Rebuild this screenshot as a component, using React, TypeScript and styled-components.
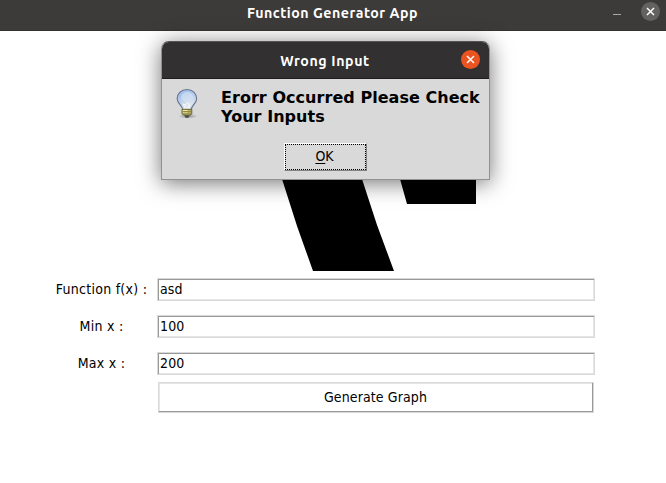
import React from "react";
import styled, { createGlobalStyle } from "styled-components";

const GlobalStyle = createGlobalStyle`
  * { box-sizing: border-box; }
  body { margin: 0; background: #fff; overflow: hidden; }
`;

const Window = styled.div`
  position: relative;
  width: 666px;
  height: 483px;
  background: #fff;
  color: #000;
  font: 14px/17px "DejaVu Sans Condensed", "DejaVu Sans", sans-serif;
  font-stretch: condensed;
  letter-spacing: 0.12px;
  overflow: hidden;
`;

const TitleBar = styled.header`
  height: 31px;
  display: grid;
  grid-template-columns: 1fr auto 1fr;
  align-items: start;
  background: #3d3b39;
  border-bottom: 1px solid #353331;
`;

const Title = styled.h1<{ $top: number; $spacing: number }>`
  grid-column: 2;
  margin: ${(p) => p.$top}px 1px 0 0;
  font: bold 14.2px/18px "Ubuntu", "Noto Sans", sans-serif;
  font-stretch: normal;
  letter-spacing: ${(p) => p.$spacing}px;
  color: #fff;
  white-space: nowrap;
`;

const Controls = styled.div<{ $top: number; $right: number }>`
  display: flex;
  justify-content: flex-end;
  gap: 20px;
  padding: ${(p) => p.$top}px ${(p) => p.$right}px 0 0;
`;

const ControlButton = styled.button<{ $fill?: string; $width?: number }>`
  width: ${(p) => p.$width ?? 19}px;
  height: 19px;
  padding: 0;
  border: 0;
  border-radius: 50%;
  background: ${(p) => p.$fill ?? "transparent"};
  svg { display: block; }
`;

const Plot = styled.svg`
  display: block;
  width: 666px;
  height: 240px;
`;

const Form = styled.form`
  display: grid;
  grid-template-columns: 110px 438px;
  grid-template-rows: repeat(3, 37px) 31px;
  align-items: center;
  margin-left: 47px;
`;

const Label = styled.label`
  padding-right: 1px;
  text-align: center;
  letter-spacing: 0.27px;
`;

const Entry = styled.input`
  width: 438px;
  height: 23px;
  padding: 0 2px 2px;
  border: 1px solid #d9d9d9;
  border-radius: 0;
  outline: none;
  background: #fff;
  box-shadow: inset 1px 1px #999, inset -1px -1px #e6e6e6;
  font: inherit;
  letter-spacing: inherit;
  color: #000;
`;

const GenerateButton = styled.button`
  grid-column: 2;
  width: 436px;
  height: 31px;
  margin-left: 1px;
  padding: 0 1px 0 0;
  border: 1px solid #d9d9d9;
  border-radius: 0;
  background: #fff;
  box-shadow: inset -1px -1px #999, inset 1px 1px #e6e6e6;
  font: inherit;
  letter-spacing: inherit;
  color: #000;
`;

const Dialog = styled.section`
  position: absolute;
  left: 161px;
  top: 41px;
  width: 329px;
  height: 139px;
  border: 1px solid #929292;
  border-top-color: #555;
  border-radius: 8px 8px 0 0;
  background: #d9d9d9;
  box-shadow: 0 3px 22px rgba(0, 0, 0, 0.55);
`;

const DialogBar = styled.header`
  display: grid;
  grid-template-columns: 1fr auto 1fr;
  height: 37px;
  border-radius: 7px 7px 0 0;
  background: #323030;
  border-bottom: 1px solid #1e1c1c;
`;

const DialogContent = styled.div`
  display: grid;
  grid-template-columns: 59px 1fr;
  height: 64px;
`;

const BulbIcon = styled.svg`
  margin: 9px 0 0 8px;
`;

const Message = styled.p`
  margin: 9px 0 0;
  font: bold 16px/19px "DejaVu Sans", sans-serif;
  font-stretch: normal;
  letter-spacing: 0.04px;
  white-space: nowrap;
`;

const OkButton = styled.button`
  display: block;
  width: 83px;
  height: 28px;
  margin: 0 auto;
  padding: 0;
  border: 1px solid;
  border-color: #fff #828282 #828282 #fff;
  border-radius: 0;
  background: #d9d9d9;
  font: inherit;
  color: #000;
`;

const FocusRing = styled.span`
  display: flex;
  align-items: center;
  justify-content: center;
  height: 26px;
  border: 1px dotted #000;
  padding: 0 2px 2px 0;
`;

const Mnemonic = styled.span`
  text-decoration: underline;
  text-underline-offset: 2px;
  text-decoration-thickness: 1px;
  text-decoration-skip-ink: none;
`;

function CloseGlyph() {
  return (
    <svg width="19" height="19" viewBox="0 0 19 19">
      <path d="M6 6L13 13M13 6L6 13" stroke="#fff" strokeWidth="1.5" />
    </svg>
  );
}

function Bulb() {
  return (
    <BulbIcon width="32" height="32" viewBox="0 0 32 32">
      <defs>
        <linearGradient id="glass" x1="0" y1="0" x2="0.4" y2="1">
          <stop offset="0" stopColor="#7fabea" />
          <stop offset="0.5" stopColor="#b7cce9" />
          <stop offset="1" stopColor="#eef0f1" />
        </linearGradient>
        <radialGradient id="shade">
          <stop offset="0" stopColor="#555" stopOpacity="0.65" />
          <stop offset="1" stopColor="#777" stopOpacity="0" />
        </radialGradient>
      </defs>
      <ellipse cx="18" cy="28.2" rx="10" ry="2.5" fill="url(#shade)" />
      <path d="M12.6 21.5C12.4 17.5 7.2 15.5 7.2 10.8C7.2 5.4 11.4 1.6 16.9 1.6S26.6 5.4 26.6 10.8C26.6 15.5 21.5 17.5 21.2 21.5Z" fill="url(#glass)" stroke="#68758d" strokeWidth="1.2" />
      <path d="M13.6 20.5C13.4 17.2 8.4 14.8 8.4 10.6C8.4 6.1 12 2.8 16.9 2.8S25.4 6.1 25.4 10.6C25.4 14.8 20.5 17.2 20.2 20.5" fill="none" stroke="#b5cdf0" strokeWidth="0.8" />
      <ellipse cx="17" cy="9" rx="6" ry="4.9" fill="#d7e3f4" opacity="0.65" />
      <path d="M14.8 20L13.4 16L15.5 17L17.5 14.5L19.5 17L18.7 20" fill="none" stroke="#fff" strokeWidth="1" opacity="0.8" />
      <path d="M12 21.3H21.8V26Q20.5 27.4 17 27.4T12 26Z" fill="#b9b565" stroke="#5d5b2b" strokeWidth="0.9" />
      <path d="M12.8 22.4H17.5M12.8 24.8H17.5" stroke="#f0ecab" strokeWidth="1" />
      <path d="M13.3 23.7H21.3M13.3 26H20.8" stroke="#77733b" strokeWidth="0.8" />
      <path d="M14.3 27.4H19.5Q19 30 17 30T14.3 27.4Z" fill="#4c4d4c" />
    </BulbIcon>
  );
}

const fields = [
  { id: "fx", label: "Function f(x) :", value: "asd" },
  { id: "min", label: "Min x :", value: "100" },
  { id: "max", label: "Max x :", value: "200" },
];

export default function App() {
  return (
    <>
      <GlobalStyle />
      <Window>
        <TitleBar>
          <Title $top={4} $spacing={0.5}>Function Generator App</Title>
          <Controls $top={2} $right={6}>
            <ControlButton $width={16} aria-label="Minimize">
              <svg width="16" height="19"><path d="M8 12.5H16" stroke="#aaa9a7" /></svg>
            </ControlButton>
            <ControlButton $fill="#636261" aria-label="Close"><CloseGlyph /></ControlButton>
          </Controls>
        </TitleBar>
        <Plot viewBox="0 0 666 240">
          <path d="M254 65L282 148L297 195L313 240H394L377 194L362 148L334 65ZM377 65L400 148L407 173H476V65Z" />
        </Plot>
        <Form>
          {fields.map((f) => (
            <React.Fragment key={f.id}>
              <Label htmlFor={f.id}>{f.label}</Label>
              <Entry id={f.id} defaultValue={f.value} />
            </React.Fragment>
          ))}
          <GenerateButton type="button">Generate Graph</GenerateButton>
        </Form>
        <Dialog role="alertdialog">
          <DialogBar>
            <Title $top={10} $spacing={0.6}>Wrong Input</Title>
            <Controls $top={8} $right={9}>
              <ControlButton $fill="#e95420" aria-label="Close dialog"><CloseGlyph /></ControlButton>
            </Controls>
          </DialogBar>
          <DialogContent>
            <Bulb />
            <Message>Erorr Occurred Please Check<br />Your Inputs</Message>
          </DialogContent>
          <OkButton><FocusRing><Mnemonic>O</Mnemonic>K</FocusRing></OkButton>
        </Dialog>
      </Window>
    </>
  );
}
